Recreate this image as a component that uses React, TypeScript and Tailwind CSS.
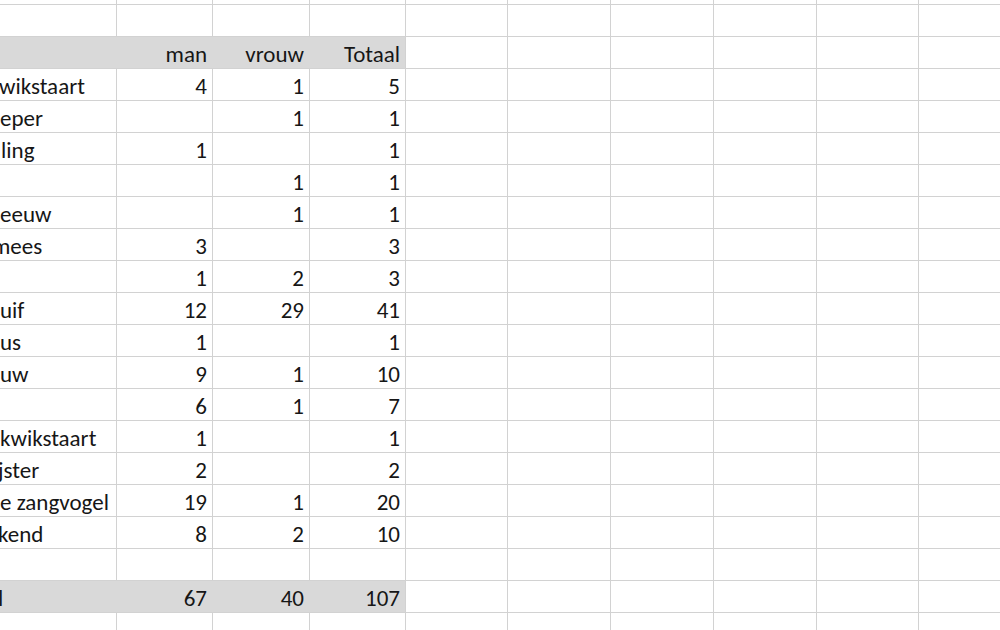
import React from "react";

const FONT = { fontFamily: 'Carlito, Lato, "Noto Sans", sans-serif' };

type Row = { a: string; b?: string; c?: string; d?: string; shade?: boolean; aShift?: string };

const rows: Row[] = [
  { a: "" },
  { a: "", b: "man", c: "vrouw", d: "Totaal", shade: true },
  { a: "wikstaart", b: "4", c: "1", d: "5", aShift: "ml-[-1px]" },
  { a: "eper", c: "1", d: "1" },
  { a: "ling", b: "1", d: "1", aShift: "ml-[1px]" },
  { a: "", c: "1", d: "1" },
  { a: "eeuw", c: "1", d: "1" },
  { a: "mees", b: "3", d: "3", aShift: "ml-[-8px]" },
  { a: "", b: "1", c: "2", d: "3" },
  { a: "uif", b: "12", c: "29", d: "41" },
  { a: "us", b: "1", d: "1" },
  { a: "uw", b: "9", c: "1", d: "10" },
  { a: "", b: "6", c: "1", d: "7" },
  { a: "kwikstaart", b: "1", d: "1" },
  { a: "jster", b: "2", d: "2", aShift: "ml-[-2px]" },
  { a: "e zangvogel", b: "19", c: "1", d: "20" },
  { a: "kend", b: "8", c: "2", d: "10", aShift: "ml-[-2px]" },
  { a: "" },
  { a: "l", b: "67", c: "40", d: "107", shade: true, aShift: "ml-[-2px]" },
  { a: "" },
];

function Row({ r }: { r: Row }) {
  const bg = r.shade ? "bg-[#d9d9d9]" : "";
  const inner = r.shade ? "border-r-[#d9d9d9]" : "border-r-[#d2d2d2]";
  return (
    <div className="flex h-[32px] shrink-0 border-b border-[#d2d2d2]">
      <div className={`w-[117px] shrink-0 overflow-hidden border-r ${inner} ${bg} flex items-end pb-[1px]`}>
        <span className={`whitespace-nowrap ${r.aShift ?? ""}`}>{r.a}</span>
      </div>
      <div className={`w-[96px] shrink-0 border-r ${inner} ${bg} flex items-end justify-end pr-[5px] pb-[1px]`}>
        {r.b}
      </div>
      <div className={`w-[97px] shrink-0 border-r ${inner} ${bg} flex items-end justify-end pr-[5px] pb-[1px]`}>
        {r.c}
      </div>
      <div className={`w-[96px] shrink-0 border-r border-r-[#d2d2d2] ${bg} flex items-end justify-end pr-[5px] pb-[1px]`}>
        {r.d}
      </div>
      <div className="w-[102px] shrink-0 border-r border-[#d2d2d2]" />
      <div className="w-[103px] shrink-0 border-r border-[#d2d2d2]" />
      <div className="w-[103px] shrink-0 border-r border-[#d2d2d2]" />
      <div className="w-[103px] shrink-0 border-r border-[#d2d2d2]" />
      <div className="w-[102px] shrink-0 border-r border-[#d2d2d2]" />
      <div className="flex-1" />
    </div>
  );
}

export default function App() {
  return (
    <div
      className="w-[1000px] h-[630px] overflow-hidden bg-white text-[#161616] text-[23px] leading-[25px] flex flex-col"
      style={FONT}
    >
      <div className="flex h-[5px] shrink-0 border-b border-[#d2d2d2]">
        <div className="w-[117px] shrink-0 border-r border-[#d2d2d2]" />
        <div className="w-[96px] shrink-0 border-r border-[#d2d2d2]" />
        <div className="w-[97px] shrink-0 border-r border-[#d2d2d2]" />
        <div className="w-[96px] shrink-0 border-r border-[#d2d2d2]" />
        <div className="w-[102px] shrink-0 border-r border-[#d2d2d2]" />
        <div className="w-[103px] shrink-0 border-r border-[#d2d2d2]" />
        <div className="w-[103px] shrink-0 border-r border-[#d2d2d2]" />
        <div className="w-[103px] shrink-0 border-r border-[#d2d2d2]" />
        <div className="w-[102px] shrink-0 border-r border-[#d2d2d2]" />
        <div className="flex-1" />
      </div>
      {rows.map((r, i) => (
        <Row key={i} r={r} />
      ))}
    </div>
  );
}
